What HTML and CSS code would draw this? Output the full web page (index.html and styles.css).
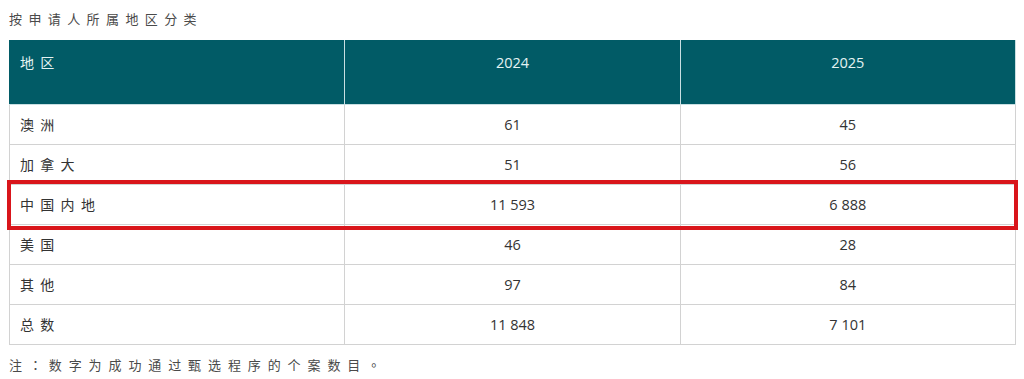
FILE: index.html
```html
<!DOCTYPE html>
<html lang="zh">
<head>
<meta charset="utf-8">
<link rel="stylesheet" href="styles.css">
</head>
<body>
<div class="wrap">
  <p class="caption">按申请人所属地区分类</p>
  <table class="data">
    <thead>
      <tr><th class="label">地区</th><th>2024</th><th>2025</th></tr>
    </thead>
    <tbody>
      <tr><td class="label">澳洲</td><td>61</td><td>45</td></tr>
      <tr><td class="label">加拿大</td><td>51</td><td>56</td></tr>
      <tr class="hl"><td class="label"><span class="box"></span>中国内地</td><td>11 593</td><td>6 888</td></tr>
      <tr><td class="label">美国</td><td>46</td><td>28</td></tr>
      <tr><td class="label">其他</td><td>97</td><td>84</td></tr>
      <tr><td class="label">总数</td><td>11 848</td><td>7 101</td></tr>
    </tbody>
  </table>
  <p class="note">注<span class="punct" lang="zh-TW">：</span>数字为成功通过甄选程序的个案数目<span class="punct" lang="zh-TW">。</span></p>
</div>
</body>
</html>
```
FILE: styles.css
```css
html, body { margin: 0; padding: 0; background: #fff; }
body {
  font-family: "Open Sans", "Noto Sans CJK SC", sans-serif;
  color: #333;
}
.wrap { padding: 0 8px 0 9px; }
.caption {
  margin: 0;
  padding-top: 10px;
  height: 40px;
  box-sizing: border-box;
  font-size: 13px;
  line-height: 18px;
  letter-spacing: 6.4px;
  color: #4a4a4a;
}
.data {
  width: 1007px;
  border-collapse: collapse;
  table-layout: fixed;
  font-size: 14.5px;
}
.data th, .data td {
  border: 1px solid #d2d2d2;
  text-align: center;
  font-weight: normal;
}
.data th {
  background: #015b66;
  color: #e4f3f3;
  height: 64px;
  box-sizing: border-box;
  vertical-align: top;
  padding: 12px 10px 0;
  line-height: 20px;
  border-color: #015b66 #c9dfe2 #c9dfe2 #015b66;
}
.data th + th { border-left: 1px solid #9fc4c9; }
.data td {
  height: 40px;
  box-sizing: border-box;
  padding: 0 10px;
  line-height: 20px;
}
.data .label { text-align: left; letter-spacing: 6.3px; font-size: 14px; }
.hl td.label { position: relative; }
.box {
  position: absolute;
  left: -3px;
  top: -5px;
  width: 1011px;
  height: 50px;
  box-sizing: border-box;
  border: 4px solid #d9151b;
  pointer-events: none;
}
.note {
  margin: 0;
  padding-top: 11px;
  font-size: 13px;
  line-height: 18px;
  letter-spacing: 6.9px;
  color: #4a4a4a;
}
.punct { font-family: "Noto Sans CJK TC", sans-serif; }
```
